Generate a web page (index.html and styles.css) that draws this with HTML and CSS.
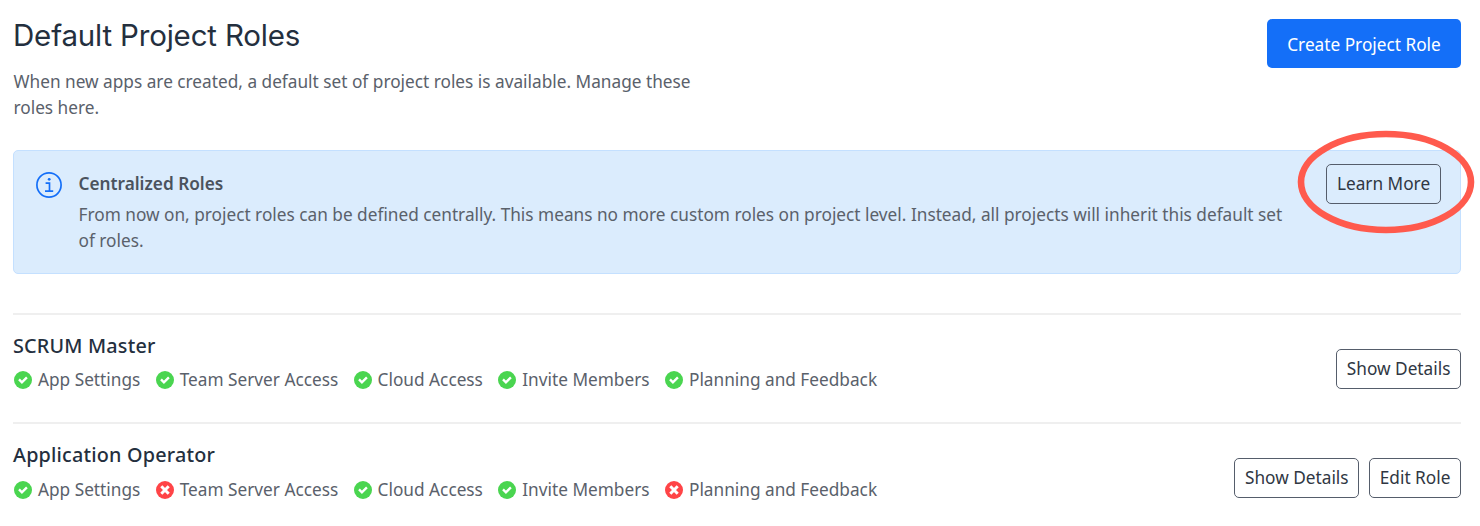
FILE: index.html
```html
<!DOCTYPE html>
<html lang="en">
<head>
<meta charset="utf-8">
<title>Default Project Roles</title>
<link rel="stylesheet" href="styles.css">
</head>
<body>
<svg class="sprite" aria-hidden="true">
  <symbol id="ok" viewBox="0 0 18 18"><circle cx="9" cy="9" r="9" fill="#4ad550"/><path d="M5 8.4l2.9 2.9 5-5" fill="none" stroke="#fff" stroke-width="2.4"/></symbol>
  <symbol id="no" viewBox="0 0 18 18"><circle cx="9" cy="9" r="9" fill="#ff4447"/><path d="M5.3 5.3l7.4 7.4M12.7 5.3l-7.4 7.4" fill="none" stroke="#fff" stroke-width="3"/></symbol>
</svg>
<main class="page">
  <header class="header">
    <div>
      <h1 class="title">Default Project Roles</h1>
      <p class="intro">When new apps are created, a default set of project roles is available. Manage these<br>roles here.</p>
    </div>
    <button class="btn-primary">Create Project Role</button>
  </header>
  <section class="notice">
    <svg class="info" viewBox="0 0 26 26" fill="none" stroke="#146ff8"><circle cx="13" cy="13" r="12.1" stroke-width="1.7"/><path d="M9.6 11.2h3.9v8M9 19.2h8.2" stroke-width="1.7"/><circle cx="13.2" cy="7.3" r="1.4" fill="#146ff8" stroke="none"/></svg>
    <div class="notice-body">
      <h2 class="notice-title">Centralized Roles</h2>
      <p class="notice-text">From now on, project roles can be defined centrally. This means no more custom roles on project level. Instead, all projects will inherit this default set<br>of roles.</p>
    </div>
    <div class="learn"><button class="btn">Learn More</button><svg class="ring" viewBox="0 0 178 104"><ellipse cx="89" cy="52" rx="85" ry="48" fill="none" stroke="#ff5a4d" stroke-width="6.6"/></svg></div>
  </section>
  <section class="role">
    <div>
      <h3 class="role-name">SCRUM Master</h3>
      <ul class="perms">
        <li><svg><use href="#ok"/></svg>App Settings</li>
        <li><svg><use href="#ok"/></svg>Team Server Access</li>
        <li><svg><use href="#ok"/></svg>Cloud Access</li>
        <li><svg><use href="#ok"/></svg>Invite Members</li>
        <li><svg><use href="#ok"/></svg>Planning and Feedback</li>
      </ul>
    </div>
    <div class="actions"><button class="btn">Show Details</button></div>
  </section>
  <section class="role">
    <div>
      <h3 class="role-name">Application Operator</h3>
      <ul class="perms">
        <li><svg><use href="#ok"/></svg>App Settings</li>
        <li><svg><use href="#no"/></svg>Team Server Access</li>
        <li><svg><use href="#ok"/></svg>Cloud Access</li>
        <li><svg><use href="#ok"/></svg>Invite Members</li>
        <li><svg><use href="#no"/></svg>Planning and Feedback</li>
      </ul>
    </div>
    <div class="actions"><button class="btn">Show Details</button><button class="btn">Edit Role</button></div>
  </section>
</main>
</body>
</html>
```
FILE: styles.css
```css
* { box-sizing: border-box; margin: 0; padding: 0; }
body { height: 526px; overflow: hidden; background: #fff; color: #5a616b; font: 17.24px/26px "Noto Sans", sans-serif; white-space: nowrap; }
.sprite { position: absolute; width: 0; height: 0; }
.page { padding: 15px 19px 0 13px; }
.header { display: flex; justify-content: space-between; align-items: flex-start; height: 135px; }
.title { font: 400 29.5px/40px Inter, sans-serif; letter-spacing: -0.18px; color: #242f3e; }
.intro { margin-top: 14px; padding-left: 0.5px; }
button { font: inherit; white-space: nowrap; }
.btn-primary { width: 194px; height: 49px; margin-top: 4px; padding-top: 2px; border: 0; border-radius: 5px; background: #146ff8; color: #fff; }
.notice { display: flex; height: 124px; padding: 21px 19px 0 22px; border: 1px solid #c4e0ff; border-radius: 5px; background: #dbecfd; }
.info { width: 26px; height: 26px; flex: none; }
.notice-body { flex: 1; margin-left: 16.5px; }
.notice-title { font-size: 17.23px; line-height: 26px; font-weight: 600; margin-top: -1px; color: #4b535e; }
.notice-text { margin-top: 5px; }
.learn { position: relative; margin-top: -8px; }
.btn { height: 40px; padding: 0 9.6px; border: 1px solid #555d6b; border-radius: 5px; background: transparent; color: #303743; }
.learn .btn { padding: 0 9.9px; }
.ring { position: absolute; left: -29px; top: -34px; width: 178px; height: 104px; }
.role { display: flex; justify-content: space-between; height: 109px; border-top: 2px solid #efefef; padding-top: 17px; }
.notice + .role { margin-top: 39px; }
.role-name { font-size: 19.8px; line-height: 28px; font-weight: 550; letter-spacing: 0.19px; color: #242f3e; }
.perms { display: flex; gap: 14.4px; list-style: none; margin-top: 7px; }
.role + .role .perms { margin-top: 8px; }
.perms li { display: flex; align-items: center; gap: 6px; }
.perms svg { width: 18px; height: 18px; margin-left: 1px; }
.actions { display: flex; align-items: flex-start; gap: 10px; padding-top: 16.5px; }
```
